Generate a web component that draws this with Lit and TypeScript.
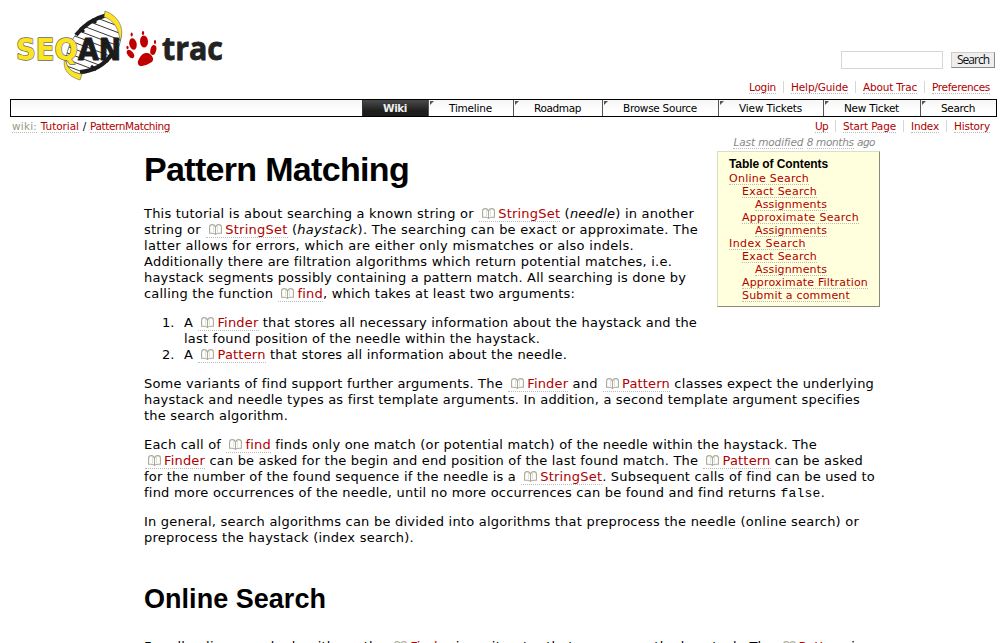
import { LitElement, html, css, svg } from "lit";
import { customElement, property } from "lit/decorators.js";

/** Inline text whose tracking is adjusted so that it fills a given measure. */
@customElement("text-run")
class TextRun extends LitElement {
  @property({ type: Number }) w = 0;
  static styles = css`
    :host { display: inline-block; white-space: nowrap; }
  `;
  firstUpdated() {
    const chars = (this.textContent || "").replace(/\s+/g, " ").trim().length;
    if (!this.w || !chars) return;
    const natural = this.getBoundingClientRect().width;
    this.style.letterSpacing = `${(this.w - natural) / chars}px`;
  }
  render() { return html`<slot></slot>`; }
}

const run = (w: number, content: unknown) => html`<text-run .w=${w}>${content}</text-run>`;
const line = (w: number, content: unknown) => html`<div class="line">${run(w, content)}</div>`;
const doc = (name: string) => html`<a class="doc"><svg class="book" viewBox="0 0 13 11" width="13" height="11"><path d="M6.500 10.500V3.500C6 1.200 4.800 .6 3.200 .6C1.500 .6 .6 1.500 .6 3V9.200H3.200C4.800 9.200 5.800 9.500 6.500 10.500C7.200 9.500 8.200 9.200 9.800 9.200H12.400V3C12.400 1.500 11.500 .6 9.800 .6C8.200 .6 7 1.200 6.500 3.500" fill="#fff" stroke="#a9ab99" stroke-width="1.100"/><path d="M4.500 1.500v7M8.500 1.500v7" stroke="#d4d5ca" stroke-width=".7"/></svg>${name}</a>`;

const meta = [["Login", 27], ["Help/Guide", 57], ["About Trac", 54], ["Preferences", 58]] as const;
const ctx = [["Up", 13], ["Start Page", 53], ["Index", 28], ["History", 36]] as const;
const tabs = [
  ["Wiki", 66, 24], ["Timeline", 85, 43], ["Roadmap", 89, 47], ["Browse Source", 116, 74],
  ["View Tickets", 105, 63], ["New Ticket", 97, 55], ["Search", 76, 34],
] as const;
const toc = [
  [0, "Online Search", 80], [1, "Exact Search", 75], [2, "Assignments", 72],
  [1, "Approximate Search", 117], [2, "Assignments", 72], [0, "Index Search", 77],
  [1, "Exact Search", 75], [2, "Assignments", 72], [1, "Approximate Filtration", 126],
  [1, "Submit a comment", 108],
] as const;

const rungs = [0, 1, 2, 3, 4, 5, 6, 7, 8, 9].map((i) =>
  svg`<path d="M60 ${4 + i * 6.6}l66 25" stroke="#222" stroke-width=".9"/>`);

@customElement("app-root")
class AppRoot extends LitElement {
  static styles = css`
    :host { display: block; box-sizing: border-box; height: 643px; overflow: hidden; background: #fff; color: #000;
      font: 13px/16px "DejaVu Sans", sans-serif; padding: 10px 10px 0; }
    a { color: #b00000; border-bottom: 1px dotted #bbb; }
    .banner { display: flex; justify-content: space-between; height: 70px; }
    .logo { display: block; margin: -10px 0 0 -10px; flex: none; }
    .search { display: flex; gap: 8px; margin: 41px 2px 0 0; height: 18px; }
    .field { box-sizing: border-box; width: 102px; height: 18px; border: 1px solid #d7d7d7; }
    .button { box-sizing: border-box; width: 44px; height: 16px; margin-top: 1px; background: #eee; border: 1px solid #ccc;
      border-right-color: #888; border-bottom-color: #888; font: 12px/14px "Open Sans", sans-serif; color: #111; text-align: center; }
    .menu { display: flex; justify-content: flex-end; font-size: 10.5px; line-height: 12px; }
    .menu span { padding: 0 7px; border-right: 1px solid #d7d7d7; height: 12px; }
    .menu span:last-child { border: 0; }
    .menu a { display: inline-block; height: 12px; }
    .meta { height: 19px; padding-top: 1px; box-sizing: border-box; }
    .nav { display: flex; justify-content: flex-end; box-sizing: border-box; width: 987px; height: 18px; border: 1px solid #000;
      background: linear-gradient(#f6f6f6, #fff 70%); font-size: 10.5px; line-height: 17px; }
    .tab { box-sizing: border-box; border-left: 1px solid #555; text-align: center; position: relative; flex: none; padding-right: 1px; }
    .tab::before { content: ""; position: absolute; left: 1px; top: 1px; border-top: 4px solid #555; border-right: 4px solid transparent; }
    .tab.active { background: linear-gradient(#4a4a4a, #1c1e1c 70%); color: #eee; font-weight: bold; border-color: #333; }
    .tab.active::before { display: none; }
    .sub { display: flex; justify-content: space-between; height: 18px; padding: 3px 0 0 2px; box-sizing: border-box; font-size: 10.5px; line-height: 12px; }
    .crumbs { word-spacing: .5px; }
    .crumbs a { display: inline-block; height: 12px; }
    .crumbs .dim { color: #999988; }
    .modified { margin: 1px 122px 0 0; text-align: right; font-size: 10.5px; line-height: 12px; font-style: italic; color: #888; height: 15px; }
    .modified a { color: #888; display: inline-block; height: 12px; }
    .page { width: 736px; margin-left: 134px; }
    .toc { float: right; box-sizing: border-box; width: 163px; height: 156px; background: #ffd; border: 1px solid #ddc;
      border-right-color: #888877; border-bottom-color: #888877; padding: 5px 0 0 11px; font-size: 11px; line-height: 13px; }
    .toc h4 { margin: 0; font: bold 12px/14px "Liberation Sans", sans-serif; padding-bottom: 1px; }
    .entry { height: 13px; }
    .entry a { display: inline-block; height: 12px; line-height: 13px; }
    .lvl1 { padding-left: 13px; }
    .lvl2 { padding-left: 26px; }
    h1 { margin: 0; height: 55px; font: bold 34px/36px "Liberation Sans", sans-serif; }
    .block { margin-bottom: 13px; }
    .line { height: 16px; white-space: nowrap; }
    .line > text-run { vertical-align: top; }
    .list { padding-left: 40px; }
    .item { display: flex; margin-left: -22px; }
    .num { width: 22px; flex: none; }
    .doc { padding: 0 0 0 3px; margin-left: 1px; }
    .book { margin-right: 3px; vertical-align: -1px; }
    code { font: 13px/14px "Liberation Mono", monospace; }
    h2 { margin: 0; padding-top: 24px; height: 80px; box-sizing: border-box; font: bold 27px/32px "Liberation Sans", sans-serif; }
  `;
  render() {
    return html`
      <div class="banner">
        <svg class="logo" width="240" height="90" viewBox="0 0 240 90" fill="none">
          <clipPath id="lens"><path d="M106 15C86 21 68 36 66 60C66 68 70 72 81 74C101 70 120 56 121 36C121 26 116 17 106 15Z"/></clipPath>
          <path d="M106 15C86 21 68 36 66 60C66 68 70 72 81 74C101 70 120 56 121 36C121 26 116 17 106 15Z" fill="#fff" stroke="#555" stroke-width=".8"/>
          <g clip-path="url(#lens)">${rungs}</g>
          <path d="M107 15C95 18 84 25 76 35" stroke="#1c1c1c" stroke-width="4"/>
          <path d="M92 19l4 4M80 28l4 4" stroke="#1c1c1c" stroke-width="3"/>
          <path d="M80 72C94 71 105 64 112 54" stroke="#1c1c1c" stroke-width="4"/>
          <path d="M91 66l5 4M104 58l4 4" stroke="#1c1c1c" stroke-width="3"/>
          <path d="M105 11C119 16 125 29 120 41C119 29 114 20 104 17Z" fill="#fce424" stroke="#665" stroke-width=".6"/>
          <path d="M65 57C66 67 71 73 82 74L80 80C67 76 62 68 65 57Z" fill="#fce424" stroke="#665" stroke-width=".6"/>
          <g font-family="DejaVu Sans" font-weight="bold" font-size="30" paint-order="stroke" stroke-linejoin="round">
            <text x="16" y="60" textLength="62" lengthAdjust="spacingAndGlyphs" fill="#fce424" stroke="#665" stroke-width="1.400">SEQ</text>
            <text x="78" y="60" textLength="43" lengthAdjust="spacingAndGlyphs" fill="#1c1c1c" stroke="#1c1c1c" stroke-width="1">AN</text>
          </g>
          <g fill="#c00000">
            <ellipse cx="133" cy="44" rx="3.700" ry="5.800" transform="rotate(-12 133 44)"/>
            <ellipse cx="144" cy="41.500" rx="4" ry="6" transform="rotate(-4 144 41.500)"/>
            <ellipse cx="130.500" cy="54" rx="2.800" ry="4.800" transform="rotate(-38 130.500 54)"/>
            <ellipse cx="153.300" cy="50" rx="2.900" ry="5" transform="rotate(14 153.300 50)"/>
            <path d="M146 53C142 53 140 57 138.500 60C136.500 63 139 67 142 66C145 65 147 65 150 63C155 61 153 57 151 55C149 53 148 53 146 53Z"/>
            <ellipse cx="131.700" cy="34.500" rx="1.100" ry="2"/><ellipse cx="143" cy="33" rx="1.200" ry="2"/>
            <ellipse cx="127.500" cy="47.500" rx="1.100" ry="1.800"/><ellipse cx="155" cy="42" rx="1.100" ry="2"/>
          </g>
          <text x="162" y="60" textLength="61" lengthAdjust="spacingAndGlyphs" font-family="Open Sans" font-weight="bold" font-size="33" fill="#222" stroke="#222" stroke-width=".8">trac</text>
        </svg>
        <div class="search"><div class="field"></div><div class="button">${run(32, "Search")}</div></div>
      </div>
      <div class="menu meta">${meta.map(([t, w]) => html`<span><a>${run(w, t)}</a></span>`)}</div>
      <div class="nav">${tabs.map(([t, w, tw], i) => html`<div class="tab ${i ? "" : "active"}" style="width:${w}px">${run(tw, t)}</div>`)}</div>
      <div class="sub">
        <div class="crumbs"><a class="dim">${run(25, "wiki:")}</a> <a>${run(38, "Tutorial")}</a> / <a>${run(80, "PatternMatching")}</a></div>
        <div class="menu">${ctx.map(([t, w]) => html`<span><a>${run(w, t)}</a></span>`)}</div>
      </div>
      <div class="modified"><a>${run(70, "Last modified")}</a> <a>${run(47, "8 months")}</a> ${run(18, "ago")}</div>
      <div class="page">
        <div class="toc">
          <h4>${run(99, "Table of Contents")}</h4>
          ${toc.map(([l, t, w]) => html`<div class="entry lvl${l}"><a>${run(w, t)}</a></div>`)}
        </div>
        <h1>${run(265, "Pattern Matching")}</h1>
        <div class="block">
          ${line(550, html`This tutorial is about searching a known string or ${doc("StringSet")} (<i>needle</i>) in another`)}
          ${line(554, html`string or ${doc("StringSet")} (<i>haystack</i>). The searching can be exact or approximate. The`)}
          ${line(490, "latter allows for errors, which are either only mismatches or also indels.")}
          ${line(528, "Additionally there are filtration algorithms which return potential matches, i.e.")}
          ${line(542, "haystack segments possibly containing a pattern match. All searching is done by")}
          ${line(431, html`calling the function ${doc("find")}, which takes at least two arguments:`)}
        </div>
        <div class="block list">
          <div class="item"><span class="num">1.</span>${line(513, html`A ${doc("Finder")} that stores all necessary information about the haystack and the`)}</div>
          ${line(356, "last found position of the needle within the haystack.")}
          <div class="item"><span class="num">2.</span>${line(383, html`A ${doc("Pattern")} that stores all information about the needle.`)}</div>
        </div>
        <div class="block">
          ${line(730, html`Some variants of find support further arguments. The ${doc("Finder")} and ${doc("Pattern")} classes expect the underlying`)}
          ${line(716, "haystack and needle types as first template arguments. In addition, a second template argument specifies")}
          ${line(144, "the search algorithm.")}
        </div>
        <div class="block">
          ${line(673, html`Each call of ${doc("find")} finds only one match (or potential match) of the needle within the haystack. The`)}
          ${line(719, html`${doc("Finder")} can be asked for the begin and end position of the last found match. The ${doc("Pattern")} can be asked`)}
          ${line(731, html`for the number of the found sequence if the needle is a ${doc("StringSet")}. Subsequent calls of find can be used to`)}
          ${line(681, html`find more occurrences of the needle, until no more occurrences can be found and find returns <code>false</code>.`)}
        </div>
        <div class="block">
          ${line(715, "In general, search algorithms can be divided into algorithms that preprocess the needle (online search) or")}
          ${line(270, "preprocess the haystack (index search).")}
        </div>
        <h2>${run(182, "Online Search")}</h2>
        <div class="block">
          ${line(718, html`For all online search algorithms, the ${doc("Finder")} is an iterator that scans over the haystack. The ${doc("Pattern")} is`)}
        </div>
      </div>
    `;
  }
}
